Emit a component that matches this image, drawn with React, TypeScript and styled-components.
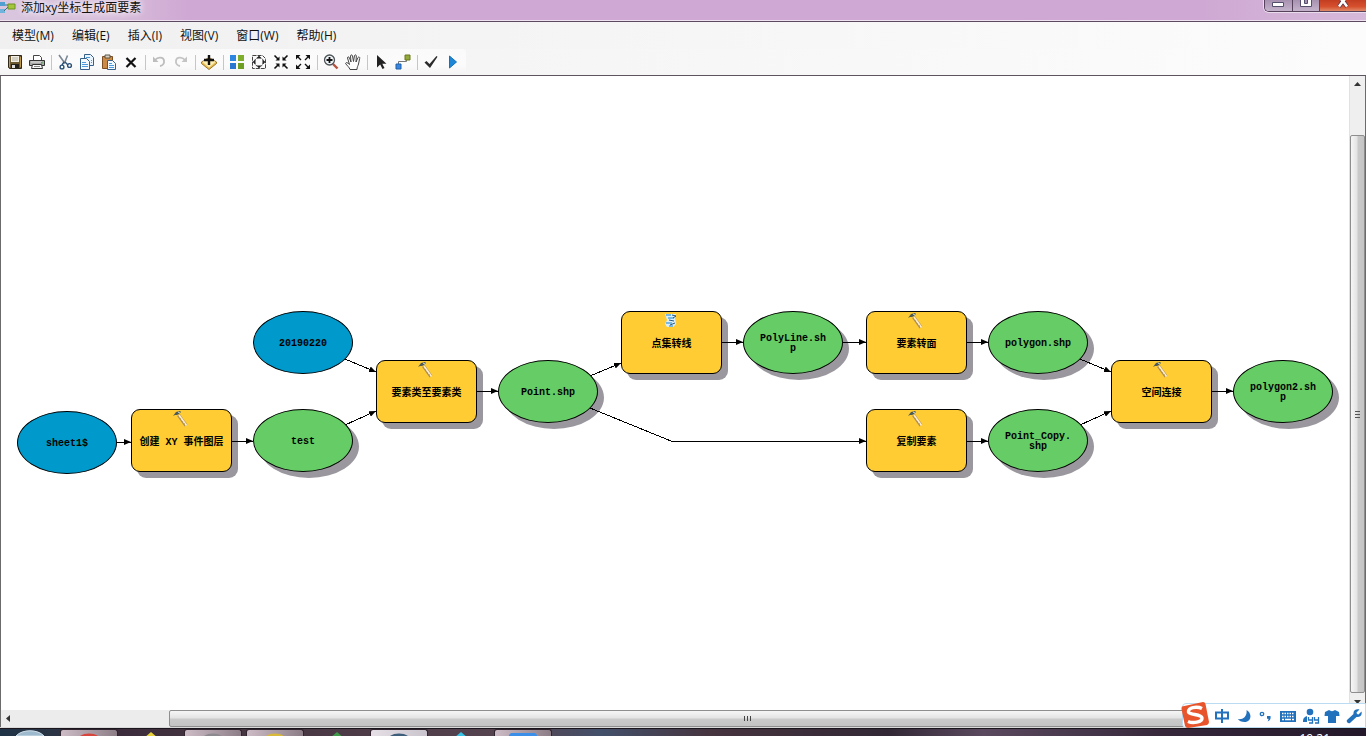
import React from "react";
import styled, { createGlobalStyle } from "styled-components";

const uiFont = `"Open Sans", "Noto Sans CJK SC", sans-serif`;

const GlobalStyle = createGlobalStyle`
  *, *::before, *::after { box-sizing: border-box; }
  html, body, #root { height: 100%; margin: 0; }
  body { overflow: hidden; font-family: ${uiFont}; font-size: 12px; color: #111; }
  button { font: inherit; color: inherit; background: none; border: 0; padding: 0; margin: 0; }
  svg { display: block; }
`;

const Desktop = styled.div`
  display: flex;
  flex-direction: column;
  height: 100vh;
  overflow: hidden;
  position: relative;
`;

const TitleBar = styled.header`
  display: flex;
  align-items: flex-start;
  height: 22px;
  flex: none;
  border-bottom: 1px solid #5d4a60;
  background: linear-gradient(90deg, #d9c6de 0, #d8bedb 110px, #cfa8d3 190px, #cfa9d3 88%, #d6b9da 100%);
  box-shadow: inset 0 -1px 0 #efe2f0;
`;

const TitleIcon = styled.div`
  width: 20px;
  height: 14px;
  flex: none;
`;

const Title = styled.h1`
  margin: 0;
  flex: 1;
  padding-left: 1px;
  font-size: 12px;
  font-weight: 400;
  line-height: 15px;
  text-shadow: 0 0 6px #fff, 0 0 8px #fff;
`;

const WindowButtons = styled.div`
  display: flex;
  height: 12px;
  width: 102px;
  border: 1px solid #56425d;
  border-top: 0;
  border-right: 0;
  border-radius: 0 0 0 5px;
  overflow: hidden;
  box-shadow: 0 0 0 1px #eadcec;
`;

const WindowButton = styled.button<{ $close?: boolean }>`
  flex: ${(p) => (p.$close ? "none" : "1")};
  width: ${(p) => (p.$close ? "47px" : "auto")};
  display: flex;
  justify-content: center;
  align-items: flex-start;
  background: ${(p) =>
    p.$close ? "linear-gradient(#c33d22, #d6502e 60%, #e08a68)" : "linear-gradient(#a791b0, #c5b3cb)"};
  & + & { border-left: 1px solid #56425d; }
`;

const MenuBar = styled.nav`
  display: flex;
  align-items: center;
  height: 27px;
  flex: none;
  padding-left: 3px;
  background: linear-gradient(90deg, #f0f0f0, #f4f4f4 35%, #fcfcfc);
`;

const MenuItem = styled.button`
  height: 24px;
  padding: 0 9px;
  line-height: 24px;
  white-space: nowrap;
`;

const ToolRow = styled.div`
  display: flex;
  height: 27px;
  flex: none;
  background: linear-gradient(90deg, #f2f2f2, #f5f5f5 35%, #fcfcfc);
  border-bottom: 1px solid #5c545e;
`;

const ToolStrip = styled.div`
  display: flex;
  align-items: center;
  padding: 0 2px 0 4px;
  border-radius: 0 4px 4px 0;
  background: linear-gradient(#fafafa, #fbfbfb 60%, #f3f3f3);
`;

const ToolButton = styled.button`
  width: 22px;
  height: 22px;
  display: grid;
  place-items: center;
`;

const Separator = styled.span`
  width: 6px;
  height: 15px;
  display: flex;
  justify-content: center;
  &::before { content: ""; width: 1px; background: #c3c6cc; }
`;

const Workspace = styled.main`
  display: grid;
  grid-template-columns: 1fr 17px;
  grid-template-rows: 1fr 17px;
  flex: 1;
  min-height: 0;
  border-left: 1px solid #6b6b6b;
`;

const Canvas = styled.section`
  position: relative;
  overflow: hidden;
  background: #fff;
`;

const Edges = styled.svg`
  position: absolute;
  inset: 0;
  width: 100%;
  height: 100%;
`;

type Kind = "input" | "tool" | "output";
const fills: Record<Kind, string> = { input: "#0099cc", tool: "#ffcc33", output: "#66cc66" };

const NodeBox = styled.div<{ $kind: Kind; $x: number; $y: number }>`
  position: absolute;
  left: ${(p) => p.$x}px;
  top: ${(p) => p.$y}px;
  width: ${(p) => (p.$kind === "tool" ? 101 : 100)}px;
  height: 63px;
  padding-top: ${(p) => (p.$kind === "tool" ? 4 : 2)}px;
  display: flex;
  align-items: center;
  justify-content: center;
  border: 1px solid #000;
  border-radius: ${(p) => (p.$kind === "tool" ? "9px" : "50%")};
  background: ${(p) => fills[p.$kind]};
  box-shadow: ${(p) => (p.$kind === "input" ? "none" : "6px 6px 0 #9b979e")};
`;

const NodeLabel = styled.span<{ $narrow: boolean }>`
  max-width: ${(p) => (p.$narrow ? "70px" : "96px")};
  text-align: center;
  word-break: break-all;
  font-family: "Liberation Mono", "Noto Sans CJK SC", monospace;
  font-size: 10px;
  font-weight: 700;
  line-height: 10px;
  color: #000;
`;

const NodeBadge = styled.span`
  position: absolute;
  left: 41px;
  top: 0;
`;

const VScroll = styled.div`
  display: flex;
  flex-direction: column;
  background: #efefef;
  border-left: 1px solid #e2e2e2;
  border-right: 1px solid #6b6b6b;
`;

const HScroll = styled.div`
  display: flex;
  grid-column: 1 / 3;
  background: #ececec;
  padding-right: 24px;
`;

const ScrollArrow = styled.button`
  flex: none;
  width: 15px;
  height: 17px;
  display: grid;
  place-items: center;
`;

const Track = styled.div<{ $grow: number }>`
  flex: ${(p) => p.$grow} 0 0;
`;

const Thumb = styled.div<{ $vertical?: boolean; $grow: number }>`
  flex: ${(p) => p.$grow} 0 0;
  display: grid;
  place-items: center;
  border: 1px solid #8e8e8e;
  border-radius: 2px;
  background: linear-gradient(${(p) => (p.$vertical ? "90deg" : "180deg")}, #f6f6f6, #e4e4e4 45%, #cacaca 55%, #c4c4c4);
`;

const TaskBar = styled.footer`
  display: flex;
  position: relative;
  height: 9px;
  flex: none;
  overflow: hidden;
  border-top: 1px solid #d9d9d9;
  background: linear-gradient(90deg, #1f3346 0, #2b3444 60px, #3c2b3b 120px, #43333f 200px, #564450 38%, #43506a 44%, #46343f 52%, #322835 65%, #5b4a5f 72%, #37283c 85%, #23182a 100%);
  box-shadow: inset 0 1px 0 #1b161d;
`;

const StartArea = styled.div`
  width: 60px;
  flex: none;
  display: flex;
  justify-content: center;
  padding-top: 1px;
`;

const TaskItem = styled.button<{ $active?: boolean; $light?: boolean }>`
  width: 58px;
  height: 8px;
  flex: none;
  display: flex;
  justify-content: center;
  margin-top: 1px;
  margin-right: 4px;
  border: ${(p) => (p.$active ? "1px solid #30252f" : "1px solid transparent")};
  border-bottom: 0;
  border-radius: 3px 3px 0 0;
  background: ${(p) =>
    p.$light ? "linear-gradient(90deg, #e6dfe6, #c9c4cd)" : p.$active ? "linear-gradient(90deg, #cdbcc5, #8c7d87)" : "none"};
`;

const Clock = styled.time`
  margin-left: auto;
  padding-right: 36px;
  padding-top: 5px;
  line-height: 12px;
  color: #fff;
`;

const ImeBar = styled.aside`
  position: absolute;
  right: 0;
  bottom: 8px;
  height: 25px;
  width: 184px;
  display: flex;
  align-items: center;
  gap: 6px;
  padding-left: 31px;
  background: #fff;
  border: 1px solid #b9dcf2;
  border-radius: 4px 0 0 4px;
  color: #2271bd;
`;

const ImeLogo = styled.span`
  position: absolute;
  left: -3px;
  top: -4px;
`;

const ImeButton = styled.button`
  width: 16px;
  height: 20px;
  flex: none;
  display: grid;
  place-items: center;
`;

const I = ({ children, w = 16, h = 16 }: { children: React.ReactNode; w?: number; h?: number }) => (
  <svg width={w} height={h} viewBox={`0 0 ${w} ${h}`} fill="none" aria-hidden="true">
    {children}
  </svg>
);

const icons: Record<string, React.ReactNode> = {
  save: (
    <I>
      <path d="M1.5 1.5h13v13h-12l-1-1z" fill="#6d5a33" stroke="#2e271a" />
      <path d="M4 2h8v6H4z" fill="#f1eee6" />
      <path d="M5 4h6M5 6h6" stroke="#b5ae9d" />
      <path d="M4 10h8v4H4z" fill="#24211d" />
      <path d="M5 11h3v3H5z" fill="#ddd" />
      <path d="M2.500 3v10M13.500 3v10" stroke="#c09a46" />
    </I>
  ),
  print: (
    <I>
      <path d="M4.500 6V1.500h6l2 2V6" fill="#fff" stroke="#444" />
      <path d="M.5 6.500h15v5H.5z" fill="#a9a9a9" stroke="#333" />
      <path d="M2 8h11" stroke="#e4e4e4" />
      <path d="M3.500 10.500h9l1 4h-11z" fill="#f8f8f8" stroke="#333" />
      <path d="M5 12.500h6" stroke="#888" />
      <path d="M12 8h1.500v1.500H12z" fill="#4a4" />
    </I>
  ),
  cut: (
    <I>
      <path d="M2 1l6 8.500M10.500 1.500L7.500 9" stroke="#7a8794" strokeWidth="1.600" />
      <path d="M7 8l-2 3M8 8l3 3" stroke="#2c5277" strokeWidth="1.400" />
      <circle cx="5" cy="13" r="1.900" stroke="#2c5277" strokeWidth="1.400" />
      <circle cx="12.500" cy="11.500" r="1.900" stroke="#2c5277" strokeWidth="1.400" />
    </I>
  ),
  copy: (
    <I>
      <path d="M5.500 .5h6l3 3v8h-9z" fill="#eaf4fd" stroke="#35608c" />
      <path d="M1.500 4.500h6l3 3v8h-9z" fill="#f4faff" stroke="#35608c" />
      <path d="M3 8.500h4M3 10.500h6M3 12.500h6M7 3.500h4M12 6.500h1M12 8.500h1" stroke="#4e9bdc" />
    </I>
  ),
  paste: (
    <I>
      <path d="M1.500 2.500h10v12h-10z" fill="#cb8a45" stroke="#7c4e20" />
      <path d="M4 1h5v3H4z" fill="#d9d3c5" stroke="#5a5346" />
      <path d="M6.500 6.500h5l3 3v6h-8z" fill="#f2f9ff" stroke="#35608c" />
      <path d="M8 9.500h3M8 11.500h5M8 13.500h5" stroke="#4e9bdc" />
    </I>
  ),
  remove: (
    <I>
      <path d="M3.500 4l9 9M12.500 4l-9 9" stroke="#111" strokeWidth="2.200" />
    </I>
  ),
  undo: (
    <I>
      <path d="M2 2.500V8h5.500z" fill="#bdbdbd" />
      <path d="M4 6c3-3.500 8.500-3 9 .5.400 3-1.500 5-4 5.500" stroke="#bdbdbd" strokeWidth="1.800" />
    </I>
  ),
  redo: (
    <I>
      <path d="M14 2.500V8H8.500z" fill="#c4c4c4" />
      <path d="M12 6C9 2.500 3.500 3 3 6.500c-.4 3 1.500 5 4 5.500" stroke="#c4c4c4" strokeWidth="1.800" />
    </I>
  ),
  add: (
    <I>
      <path d="M8 3.500l7.500 4.500v1.500L8 15.500.5 9.500V8z" fill="#e7bd55" stroke="#9c7524" />
      <path d="M8 4l6.500 4L8 13.500 1.500 8z" fill="#fdeeb2" />
      <path d="M8 1v10M3 6h10" stroke="#111" strokeWidth="2.400" />
    </I>
  ),
  grid: (
    <I>
      <path d="M1 1h6v6H1z" fill="#2f86e0" />
      <path d="M9 1h6v6H9z" fill="#7fae2c" />
      <path d="M1 9h6v6H1z" fill="#2a76d0" />
      <path d="M9 9h6v6H9z" fill="#2a76d0" />
      <path d="M9 9h6v6H9z" fill="#6f9f22" />
    </I>
  ),
  extent: (
    <I>
      <path d="M1.500 1.500h10l3 3v10h-13z" stroke="#444" strokeDasharray="4 1" />
      <circle cx="8" cy="8" r="4.500" stroke="#444" strokeDasharray="2 1" />
      <path d="M8 1.500l2.500 3h-5zM8 14.500l2.500-3h-5zM1.500 8l3-2.500v5zM14.500 8l-3-2.500v5z" fill="#222" />
    </I>
  ),
  shrink: (
    <I>
      <path d="M1.500 1.500L5 5M14.500 1.500L11 5M1.500 14.500L5 11M14.500 14.500L11 11" stroke="#111" strokeWidth="1.600" />
      <path d="M6.500 2.500v4h-4zM9.500 2.500v4h4zM6.500 13.500v-4h-4zM9.500 13.500v-4h4z" fill="#111" />
    </I>
  ),
  expand: (
    <I>
      <path d="M3 3l3 3M13 3l-3 3M3 13l3-3M13 13l-3-3" stroke="#111" strokeWidth="1.400" />
      <path d="M1 1h4.500L1 5.500zM15 1h-4.500L15 5.500zM1 15h4.500L1 10.500zM15 15h-4.500l4.500-4.500z" fill="#111" />
    </I>
  ),
  zoom: (
    <I>
      <path d="M10 10l4.500 4.500" stroke="#b5533f" strokeWidth="2.400" />
      <circle cx="6.500" cy="6" r="5" fill="#f0f5f8" stroke="#4c5256" strokeWidth="1.300" />
      <path d="M6.500 3v6M3.500 6h6" stroke="#111" strokeWidth="1.800" />
    </I>
  ),
  hand: (
    <I>
      <path
        d="M5 15.500c-.5-2-3-4-4.500-6 .5-1.500 2-1 4 1L2.500 4c0-1.500 1.500-1.500 2 0L6 8 5.500 2c.3-1.500 1.700-1.500 2 0L8.500 7.500 9.500 1.500c.5-1 1.800-.8 1.800.5L11 8l2-4.500c.7-1 2-.5 1.700.8L13.500 10c-.5 2-1.500 3-1.500 5.500z"
        fill="#fff"
        stroke="#444"
      />
    </I>
  ),
  pointer: (
    <I>
      <path d="M4 1v12.500l3.200-3L9.500 15l2-1-2.200-4.300H13.500z" fill="#222" />
    </I>
  ),
  connect: (
    <I>
      <path d="M3.500 10V7.500h8V5" stroke="#777" />
      <path d="M1 10h5v5H1z" fill="#3a86dc" stroke="#1f5fae" />
      <path d="M10 1h5v5h-5z" fill="#93a83a" stroke="#68781e" />
    </I>
  ),
  check: (
    <I>
      <path d="M1.500 8.500l2-1.500 3 3L13.500 2l1 .8L7 14z" fill="#2b2b2b" />
    </I>
  ),
  run: (
    <I>
      <path d="M4.500 2l7 6-7 6z" fill="#1e86d6" stroke="#1670b8" />
    </I>
  ),
};

const toolGroups: [string, string][][] = [
  [["save", "保存"], ["print", "打印"]],
  [["cut", "剪切"], ["copy", "复制"], ["paste", "粘贴"], ["remove", "删除"]],
  [["undo", "撤消"], ["redo", "恢复"]],
  [["add", "添加数据或工具"]],
  [["grid", "自动布局"], ["extent", "全图"], ["shrink", "固定比例缩小"], ["expand", "固定比例放大"]],
  [["zoom", "放大"], ["hand", "平移"]],
  [["pointer", "选择"], ["connect", "连接"]],
  [["check", "验证整个模型"], ["run", "运行"]],
];

const menus = ["模型(M)", "编辑(E)", "插入(I)", "视图(V)", "窗口(W)", "帮助(H)"];

interface ModelNode {
  label: string;
  kind: Kind;
  x: number;
  y: number;
  script?: boolean;
}

const nodes: ModelNode[] = [
  { label: "sheet1$", kind: "input", x: 16, y: 335 },
  { label: "20190220", kind: "input", x: 252, y: 235 },
  { label: "创建 XY 事件图层", kind: "tool", x: 130, y: 333 },
  { label: "test", kind: "output", x: 252, y: 333 },
  { label: "要素类至要素类", kind: "tool", x: 375, y: 284 },
  { label: "Point.shp", kind: "output", x: 497, y: 284 },
  { label: "点集转线", kind: "tool", x: 620, y: 235, script: true },
  { label: "PolyLine.shp", kind: "output", x: 742, y: 235 },
  { label: "要素转面", kind: "tool", x: 865, y: 235 },
  { label: "polygon.shp", kind: "output", x: 987, y: 235 },
  { label: "复制要素", kind: "tool", x: 865, y: 333 },
  { label: "Point_Copy.shp", kind: "output", x: 987, y: 333 },
  { label: "空间连接", kind: "tool", x: 1110, y: 284 },
  { label: "polygon2.shp", kind: "output", x: 1232, y: 284 },
];

const edges = [
  "115,366 130,366",
  "231,365 252,365",
  "344,283 375,296",
  "344,349 375,335",
  "476,315 497,315",
  "589,300 620,287",
  "589,332 670,365 865,365",
  "721,266 742,266",
  "842,266 865,266",
  "966,266 987,266",
  "1079,283 1110,296",
  "966,365 987,365",
  "1079,349 1110,335",
  "1211,315 1232,315",
];

const Hammer = () => (
  <I w={16} h={18}>
    <path d="M5.500 5l7.500 10.500" stroke="#b08d50" strokeWidth="3.400" />
    <path d="M6 5l7.500 10.500" stroke="#fbeccd" strokeWidth="1.800" />
    <path d="M7 9l1 0M9 12l1 0M11 14l1 0" stroke="#a98a55" />
    <path d="M0 6l3-4 4-1 1 1-2 2-2 1-2 0z" fill="#4c5a58" />
    <path d="M5 2l2 1" stroke="#cfe0e4" />
  </I>
);

const Script = () => (
  <I w={16} h={18}>
    <path d="M2 2h11l-1 4 1 6-3 3H4l-2-3 2-4z" fill="#d9effb" />
    <path d="M3 3h5M5 6h6M3 11h6M6 14h4" stroke="#5aa9dc" strokeWidth="1.600" />
    <path d="M9 3l4 1-3 2M6 8l5 1M7 13l5-2" stroke="#27567d" />
  </I>
);

const Arrow = ({ d }: { d: string }) => (
  <I w={7} h={7}>
    <path d={d} fill="#333" />
  </I>
);

const taskGlyphs: { active?: boolean; light?: boolean; color: string; shape: "round" | "peak" | "square" }[] = [
  { active: true, color: "#d8453c", shape: "round" },
  { color: "#e8d23c", shape: "peak" },
  { active: true, color: "#8d8a8f", shape: "round" },
  { active: true, color: "#d9b93a", shape: "round" },
  { color: "#3f9a4a", shape: "peak" },
  { active: true, light: true, color: "#3d5f7c", shape: "round" },
  { color: "#35c3e6", shape: "peak" },
  { active: true, color: "#3b8fe8", shape: "square" },
];

const glyphPaths = {
  round: "M4 8C8 2 22 2 26 8z",
  peak: "M8 8l7-6 7 6z",
  square: "M1 8V5l2-2h24l2 2v3z",
};

export default function App() {
  return (
    <Desktop>
      <GlobalStyle />
      <TitleBar>
        <TitleIcon>
          <I w={20} h={14}>
            <path d="M0 2h5v4H0z" fill="#4f9fd0" />
            <path d="M8 4h7v5H8z" fill="#a4c63c" stroke="#6d9420" />
            <path d="M0 9h5v4H0z" fill="#6fb4dc" />
            <path d="M5 5h3M4 11l4-4" stroke="#49737c" />
          </I>
        </TitleIcon>
        <Title>添加xy坐标生成面要素</Title>
        <WindowButtons>
          <WindowButton aria-label="最小化">
            <I w={14} h={8}>
              <path d="M1.500 2.500h11v4h-11z" fill="#fff" stroke="#54506c" />
            </I>
          </WindowButton>
          <WindowButton aria-label="还原">
            <I w={14} h={8}>
              <path d="M1.500-3h11v9.500h-11z" fill="#fff" stroke="#54506c" />
              <path d="M5.500-1h3v4.500h-3z" fill="#a791b0" stroke="#54506c" />
            </I>
          </WindowButton>
          <WindowButton $close aria-label="关闭">
            <I w={14} h={8}>
              <path d="M3 6.500L7 1l4 5.500M5 0l2 2 2-2" stroke="#54364a" strokeWidth="4" />
              <path d="M3 6.500L7 1l4 5.500M5-1l2 2.500 2-2.500" stroke="#fff" strokeWidth="2.500" />
            </I>
          </WindowButton>
        </WindowButtons>
      </TitleBar>

      <MenuBar>
        {menus.map((m) => (
          <MenuItem key={m}>{m}</MenuItem>
        ))}
      </MenuBar>

      <ToolRow>
        <ToolStrip role="toolbar">
          {toolGroups.map((group, i) => (
            <React.Fragment key={i}>
              {i > 0 && <Separator />}
              {group.map(([id, label]) => (
                <ToolButton key={id} aria-label={label}>
                  {icons[id]}
                </ToolButton>
              ))}
            </React.Fragment>
          ))}
        </ToolStrip>
      </ToolRow>

      <Workspace>
        <Canvas>
          {nodes.map((n) => (
            <NodeBox key={n.label} $kind={n.kind} $x={n.x} $y={n.y}>
              {n.kind === "tool" && <NodeBadge>{n.script ? <Script /> : <Hammer />}</NodeBadge>}
              <NodeLabel $narrow={n.kind !== "tool"}>{n.label}</NodeLabel>
            </NodeBox>
          ))}
          <Edges aria-hidden="true">
            <defs>
              <marker id="head" markerUnits="userSpaceOnUse" markerWidth="7" markerHeight="6" refX="7" refY="3" orient="auto">
                <path d="M0 0l7 3-7 3z" fill="#000" />
              </marker>
            </defs>
            {edges.map((points) => (
              <polyline
                key={points}
                points={points}
                fill="none"
                stroke="#000"
                shapeRendering="crispEdges"
                markerEnd="url(#head)"
              />
            ))}
          </Edges>
        </Canvas>
        <VScroll>
          <ScrollArrow aria-label="向上滚动">
            <Arrow d="M0 5l3.500-4L7 5z" />
          </ScrollArrow>
          <Track $grow={42} />
          <Thumb $vertical $grow={556}>
            <I w={7} h={8}>
              <path d="M1 1.500h5M1 4.500h5M1 7.500h5" stroke="#555" />
            </I>
          </Thumb>
          <ScrollArrow aria-label="向下滚动">
            <Arrow d="M0 2l3.500 4L7 2z" />
          </ScrollArrow>
        </VScroll>
        <HScroll>
          <ScrollArrow aria-label="向左滚动">
            <Arrow d="M5 0L1 3.500 5 7z" />
          </ScrollArrow>
          <Track $grow={153} />
          <Thumb $grow={1158}>
            <I w={8} h={7}>
              <path d="M.5 1v5M3.500 1v5M6.500 1v5" stroke="#444" />
            </I>
          </Thumb>
          <ScrollArrow aria-label="向右滚动">
            <Arrow d="M2 0l4 3.500L2 7z" />
          </ScrollArrow>
        </HScroll>
      </Workspace>

      <TaskBar>
        <StartArea>
          <I w={30} h={7}>
            <path d="M1 7C7 0 23 0 29 7z" fill="#9db9cd" stroke="#d3e2ec" />
          </I>
        </StartArea>
        {taskGlyphs.map((g, i) => (
          <TaskItem key={i} $active={g.active} $light={g.light} aria-label={`任务 ${i + 1}`}>
            <I w={30} h={8}>
              <path d={glyphPaths[g.shape]} fill={g.color} />
            </I>
          </TaskItem>
        ))}
        <Clock>19:21</Clock>
      </TaskBar>

      <ImeBar>
        <ImeLogo>
          <I w={30} h={29}>
            <path d="M2 6.500L23 2q2 0 2.500 2L29 22q0 2-2 3L8 28q-2 0-3-2L1.500 9q0-2 .5-2.500z" fill="#e8542c" />
            <path
              d="M22 8.500C17 6 7.500 7.500 8.500 12c1 3.500 13 1.500 13.500 6 .3 4.500-9.500 5.500-14 3.500"
              stroke="#fff"
              strokeWidth="3.400"
            />
          </I>
        </ImeLogo>
        <ImeButton aria-label="中文">
          <I>
            <path d="M2 4.500h12v6H2zM8 1v14" stroke="#2271bd" strokeWidth="2" />
          </I>
        </ImeButton>
        <ImeButton aria-label="半角">
          <I>
            <path d="M10.500 2c6 3 5 12-2 12-3 0-5.500-1-6.500-3 5 1 9.500-3 8.500-9z" fill="#2271bd" />
          </I>
        </ImeButton>
        <ImeButton aria-label="标点">
          <I>
            <circle cx="4" cy="6" r="1.700" stroke="#2271bd" strokeWidth="1.300" />
            <path d="M9 8h3.500c.5 3-.5 4.500-3 5.500.8-1.200 1.200-2 .8-2.800H9z" fill="#2271bd" />
          </I>
        </ImeButton>
        <ImeButton aria-label="软键盘">
          <I>
            <path d="M0 3h16v11H0z" fill="#2271bd" />
            <path d="M2 5.500h12M2 8.500h12" stroke="#fff" strokeWidth="1.400" strokeDasharray="1.500 1" />
            <path d="M2 11.500h2M5 11.500h6M12 11.500h2" stroke="#fff" strokeWidth="1.400" />
          </I>
        </ImeButton>
        <ImeButton aria-label="等级">
          <I w={18}>
            <circle cx="8" cy="4" r="3.300" fill="#2271bd" />
            <path d="M1 13c0-3 2-5 6-5h3v6H1z" fill="#2271bd" />
            <path d="M5 8h13v8H5z" fill="#fff" />
            <path d="M6.500 9v3h4V9v6H7M12.500 9v3h4V9v6H13" stroke="#2271bd" strokeWidth="1.300" />
          </I>
        </ImeButton>
        <ImeButton aria-label="皮肤">
          <I>
            <path d="M5 2c1.500 1.500 4.500 1.500 6 0l4 2 .5 4H12v7H4V8H.5L1 4z" fill="#2271bd" />
          </I>
        </ImeButton>
        <ImeButton aria-label="工具箱">
          <I>
            <path
              d="M13.500 1.500L10.500 4.500l.5 1.500 1.500.5 3-3c1 3.500-1.500 6-5 5.500L4 15c-2 1-4-1-3-3L7.500 6C7 2.500 10 .5 13.500 1.500z"
              fill="#2271bd"
            />
          </I>
        </ImeButton>
      </ImeBar>
    </Desktop>
  );
}
